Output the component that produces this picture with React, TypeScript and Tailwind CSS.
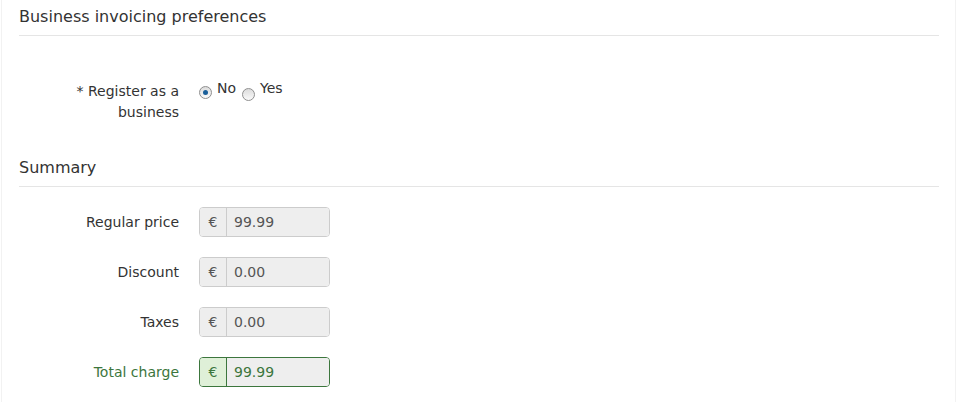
import React from "react";

const font = { fontFamily: '"DejaVu Sans", Verdana, sans-serif' };

function Field({ label, value, success }: { label: string; value: string; success?: boolean }) {
  return (
    <div className="flex items-center h-[30px]">
      <div className={`w-[160px] text-right text-[14px] pr-0 ${success ? "text-[#3c763d]" : "text-[#333]"}`}>{label}</div>
      <div
        className={`ml-[20px] flex w-[131px] h-[30px] rounded-[4px] border overflow-hidden ${
          success ? "border-[#3c763d]" : "border-[#ccc]"
        }`}
      >
        <div
          className={`w-[27px] flex items-center justify-center text-[14px] border-r ${
            success ? "bg-[#dff0d8] border-[#3c763d] text-[#3c763d]" : "bg-[#eee] border-[#ccc] text-[#555]"
          }`}
        >
          €
        </div>
        <div className={`flex-1 bg-[#eee] flex items-center pl-[7px] text-[14px] ${success ? "text-[#3c763d]" : "text-[#555]"}`}>
          {value}
        </div>
      </div>
    </div>
  );
}

function Radio({ checked }: { checked?: boolean }) {
  return (
    <span className="inline-flex w-[13px] h-[13px] rounded-full border border-[#8f8f8f] bg-gradient-to-b from-[#dcdcdc] to-[#fafafa] items-center justify-center">
      {checked && <span className="w-[5px] h-[5px] rounded-full bg-[#1a5f9a]" />}
    </span>
  );
}

export default function App() {
  return (
    <div className="w-[957px] h-[402px] bg-white overflow-hidden" style={font}>
      <div className="mx-[1px] h-full border-x border-[#f2f2f2] pl-[17px] pr-[16px]">
        <div className="pt-[5px] pb-[6px] leading-[24px] text-[16px] text-[#333] border-b border-[#e5e5e5]">
          Business invoicing preferences
        </div>
        <div className="flex mt-[45px] leading-[21px]">
          <div className="w-[160px] text-right text-[14px] text-[#333]">
            <div className="pl-[50px]">* Register as a business</div>
          </div>
          <div className="ml-[20px] flex items-start text-[14px] text-[#333]">
            <span className="mt-[5px] flex"><Radio checked /></span>
            <span className="ml-[5px] -mt-[3px]">No</span>
            <span className="ml-[6px] mt-[7px] flex"><Radio /></span>
            <span className="ml-[5px] -mt-[3px]">Yes</span>
          </div>
        </div>
        <div className="mt-[28px] pt-[5px] pb-[6px] leading-[24px] text-[16px] text-[#333] border-b border-[#e5e5e5]">
          Summary
        </div>
        <div className="mt-[20px] flex flex-col gap-[20px]">
          <Field label="Regular price" value="99.99" />
          <Field label="Discount" value="0.00" />
          <Field label="Taxes" value="0.00" />
          <Field label="Total charge" value="99.99" success />
        </div>
      </div>
    </div>
  );
}
